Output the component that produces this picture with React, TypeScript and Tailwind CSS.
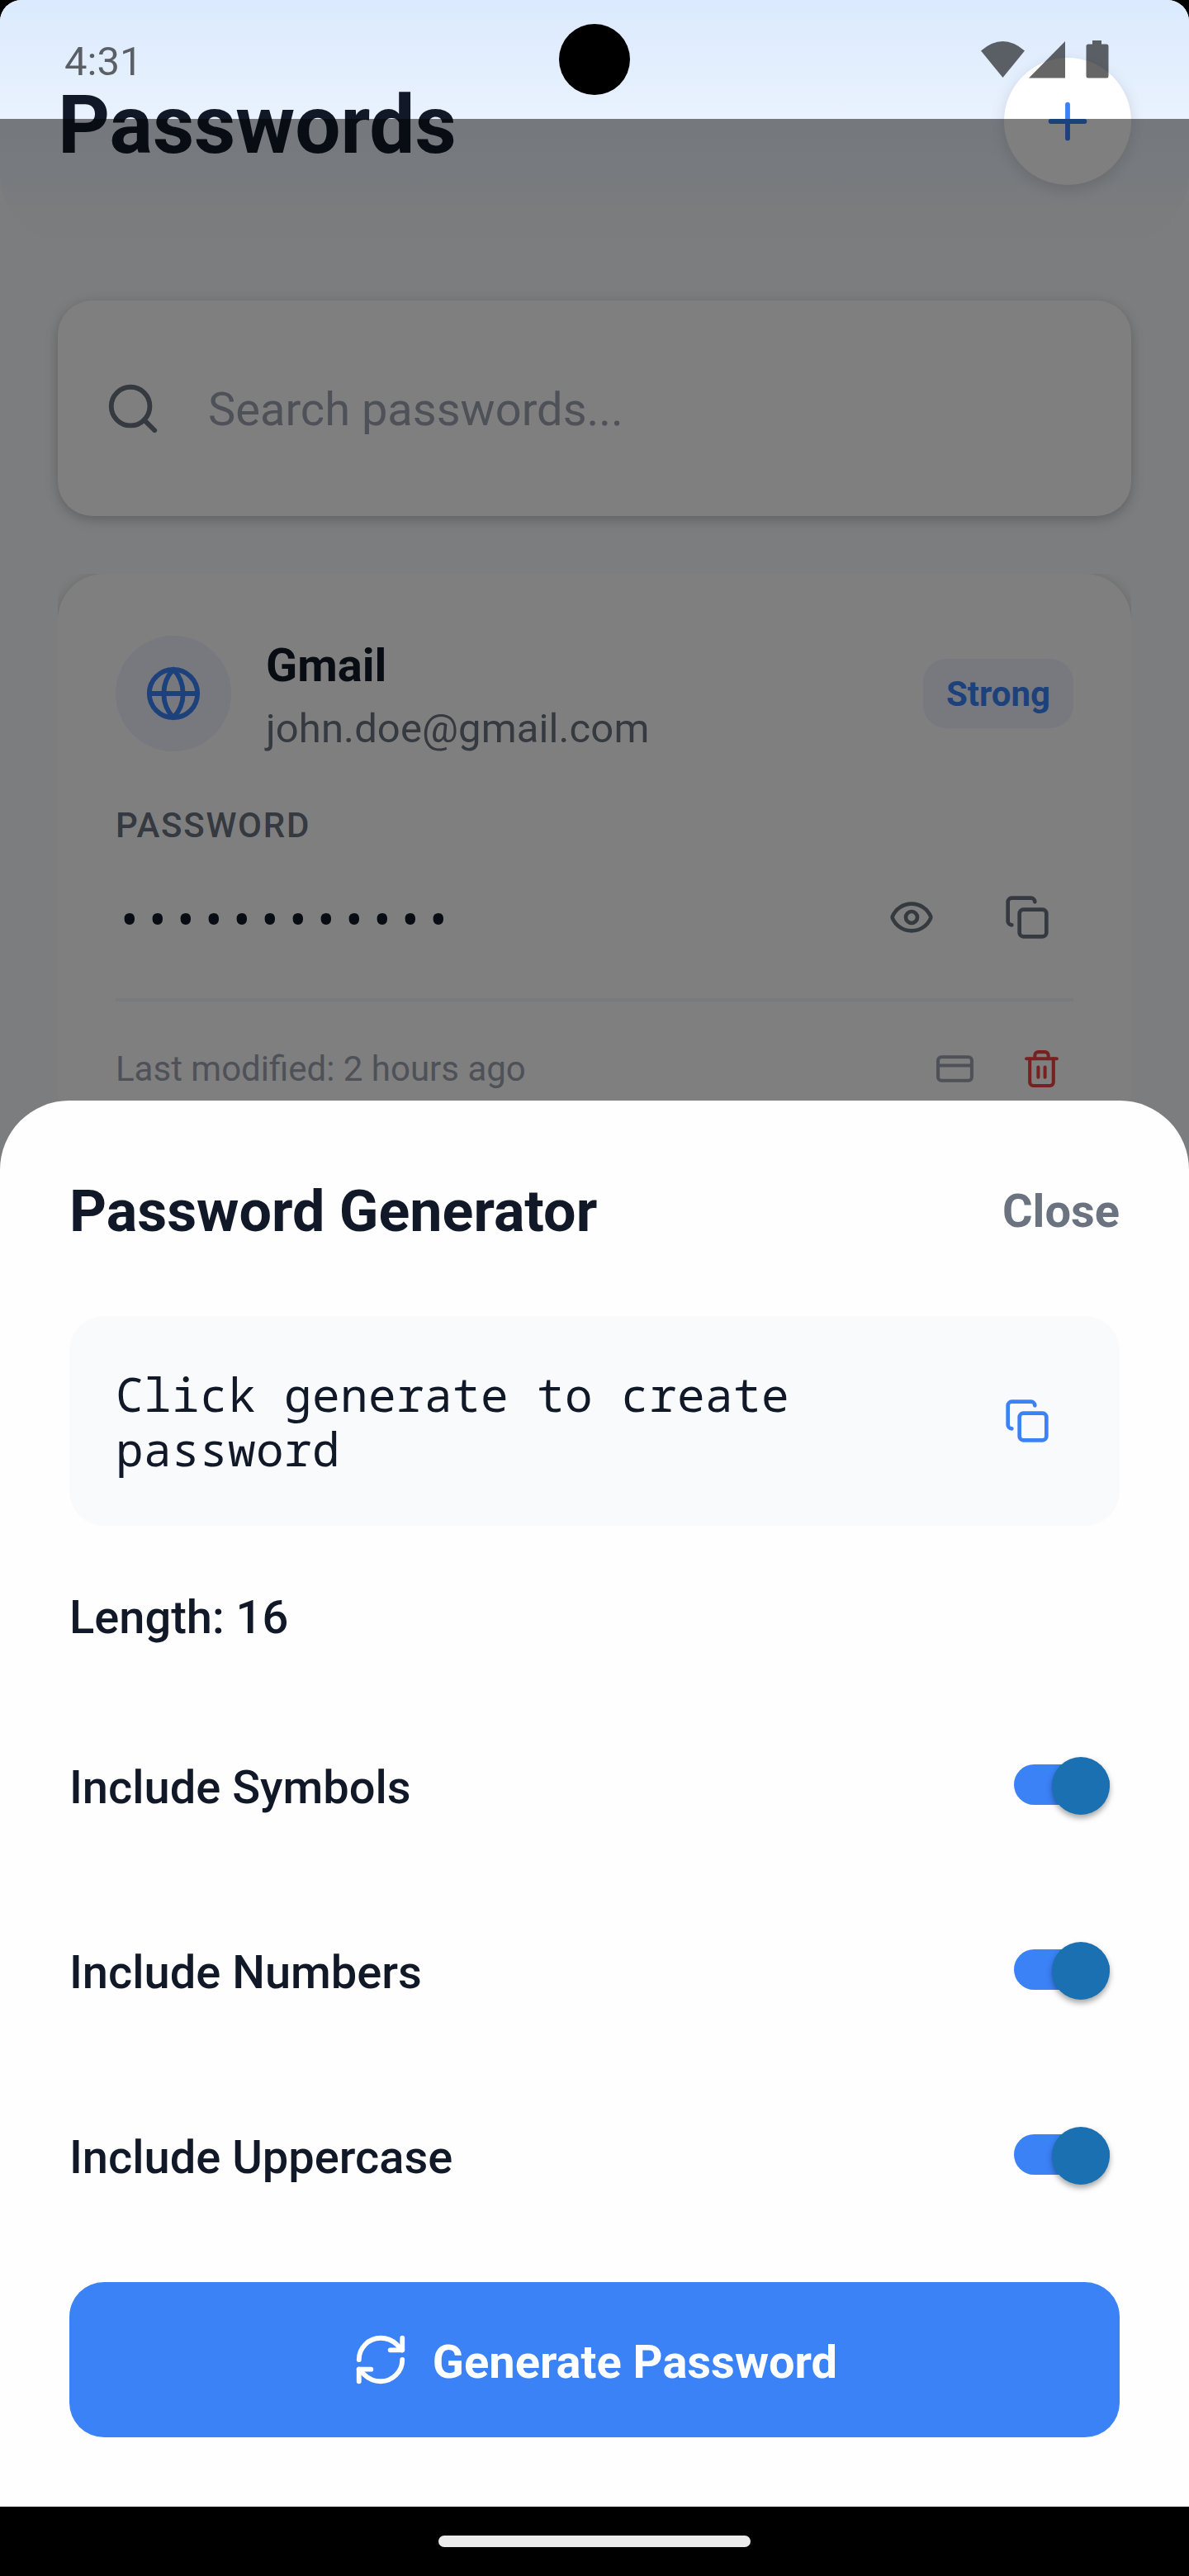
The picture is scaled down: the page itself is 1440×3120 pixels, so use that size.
import { Search, Plus, Globe, Eye, Copy, CreditCard, Trash2, RefreshCw } from "lucide-react";

function StatusBar() {
  return (
    <div className="absolute inset-x-0 top-0 z-30 flex h-36 items-center justify-between pl-[78px] pr-[96px]">
      <span className="pt-[4px] text-[49px] leading-none text-black/60">4:31</span>
      <div className="absolute left-[677px] top-[29px] size-[86px] rounded-full bg-black" />
      <svg width="158" height="48" viewBox="0 0 158 48" className="fill-black/60">
        <path d="M2 13.500Q28.500-9.500 55 13.500L28.500 46Z" />
        <path d="M104 2V46.500H60Z" />
        <path d="M137 1h11v4.500h6q2.500 0 2.500 2.500v36q0 2.500-2.500 2.500h-22q-2.500 0-2.500-2.500v-36q0-2.500 2.500-2.500h5z" />
      </svg>
    </div>
  );
}

function PageHeader() {
  return (
    <header className="flex h-[294px] items-start justify-between rounded-b-[84px] bg-linear-to-b from-[#dbeafe] to-[#f8fafc] px-[70px] pt-[70px]">
      <h1 className="mt-[24px] text-[98px] font-bold leading-[115px] tracking-[-0.1px] text-[#111827]">Passwords</h1>
      <button className="flex size-[154px] items-center justify-center rounded-full bg-white shadow-[0_6px_18px_rgba(0,0,0,0.13)]">
        <Plus size={70} className="text-[#3b82f6]" />
      </button>
    </header>
  );
}

function SearchBox() {
  return (
    <div className="mx-[70px] mt-[70px] flex h-[261px] items-center gap-14 rounded-[42px] bg-white px-14 shadow-[0_4px_15px_rgba(0,0,0,0.23)]">
      <Search size={70} className="text-[#6b7280]" />
      <span className="pt-[2px] text-[56px] leading-none text-[#9ca3af]">Search passwords...</span>
    </div>
  );
}

function PasswordCard() {
  return (
    <div className="mx-[70px] mt-[70px] overflow-hidden">
      <article className="h-[700px] rounded-t-[56px] bg-white px-[70px] pt-[70px] shadow-[0_4px_15px_rgba(0,0,0,0.23)]">
        <div className="flex h-[150px] items-center">
          <div className="flex size-[140px] items-center justify-center rounded-full bg-[#eff2ff]">
            <Globe size={70} className="text-[#3b82f6]" />
          </div>
          <div className="ml-[42px] flex-1 pt-[5px]">
            <div className="text-[56px] font-bold leading-[66px] text-[#111827]">Gmail</div>
            <div className="mt-[15px] text-[49px] leading-[58px] tracking-[0.1px] text-[#6b7280]">john.doe@gmail.com</div>
          </div>
          <span className="flex h-[84px] items-center rounded-[28px] bg-[#eff2ff] px-7 pt-[2px] text-[42px] font-bold leading-none text-[#3b82f6]">
            Strong
          </span>
        </div>
        <div className="mt-[60px] text-[42px] font-medium leading-[49px] tracking-[1.75px] text-[#6b7280]">PASSWORD</div>
        <div className="mt-[31px] flex h-[112px] items-center">
          <span className="flex-1 pt-[2px] font-['Droid_Sans_Mono','Noto_Sans_Mono','DejaVu_Sans_Mono',monospace] text-[56px] leading-none tracking-[0.4px] text-[#111827]">
            ••••••••••••
          </span>
          <Eye size={56} className="mx-7 text-[#6b7280]" />
          <Copy size={56} className="ml-14 mr-7 text-[#6b7280]" />
        </div>
        <div className="mt-[42px] flex items-center border-t-[4px] border-[#f3f4f6] pt-[56px]">
          <span className="flex-1 pt-[1px] text-[42px] leading-[49px] text-[#9ca3af]">Last modified: 2 hours ago</span>
          <CreditCard size={49} className="mr-14 text-[#9ca3af]" />
          <Trash2 size={49} className="mr-[14px] text-[#ef4444]" />
        </div>
      </article>
    </div>
  );
}

function Toggle({ label }: { label: string }) {
  return (
    <div className="flex h-[112px] items-center justify-between">
      <span className="pt-[4px] text-[56px] font-medium leading-none text-[#111827]">{label}</span>
      <div className="relative mb-[3px] mr-3 flex h-[49px] w-[116px] items-center rounded-full bg-[#3b82f6]">
        <div className="absolute -top-[9px] right-0 size-[70px] rounded-full bg-[#1a70b0] shadow-[0_4px_7px_rgba(0,0,0,0.35)]" />
      </div>
    </div>
  );
}

function GeneratorSheet() {
  return (
    <section className="absolute inset-x-0 top-[1333px] z-20 flex h-[1703px] flex-col rounded-t-[84px] bg-[#fefefe] px-[84px] pt-[84px]">
      <div className="flex h-[100px] items-center justify-between">
        <h2 className="text-[70px] font-bold leading-none text-[#111827]">Password Generator</h2>
        <span className="text-[56px] font-bold leading-none text-[#6b7280]">Close</span>
      </div>
      <div className="mt-[77px] flex h-[254px] items-center rounded-[42px] bg-[#f8fafc] pl-14 pr-[84px]">
        <p className="flex-1 pr-[60px] font-['Droid_Sans_Mono','Noto_Sans_Mono','DejaVu_Sans_Mono',monospace] text-[56px] leading-[66px] tracking-[0.4px] text-[#111827]">
          Click generate to create password
        </p>
        <Copy size={56} className="text-[#3b82f6]" />
      </div>
      <div className="mt-[78px] text-[56px] font-medium leading-[66px] text-[#111827]">Length: 16</div>
      <div className="mt-[115px] flex flex-col gap-28">
        <Toggle label="Include Symbols" />
        <Toggle label="Include Numbers" />
        <Toggle label="Include Uppercase" />
      </div>
      <button className="mt-[97px] flex h-[188px] items-center justify-center gap-7 rounded-[42px] bg-[#3b82f6] text-[56px] font-bold leading-none text-white">
        <RefreshCw size={70} />
        <span className="pt-[5px]">Generate Password</span>
      </button>
    </section>
  );
}

export default function App() {
  return (
    <div className="h-[3120px] w-[1440px] bg-black font-[Roboto,sans-serif]">
      <main className="relative h-[3120px] overflow-hidden rounded-t-[26px] bg-[#f8fafc]">
        <StatusBar />
        <PageHeader />
        <SearchBox />
        <PasswordCard />
        <div className="absolute inset-x-0 bottom-0 top-36 z-10 bg-black/50" />
        <GeneratorSheet />
        <nav className="absolute inset-x-0 bottom-0 z-20 flex h-[84px] items-center justify-center bg-black">
          <div className="h-[14px] w-[378px] rounded-full bg-[#ebebeb]" />
        </nav>
      </main>
    </div>
  );
}
